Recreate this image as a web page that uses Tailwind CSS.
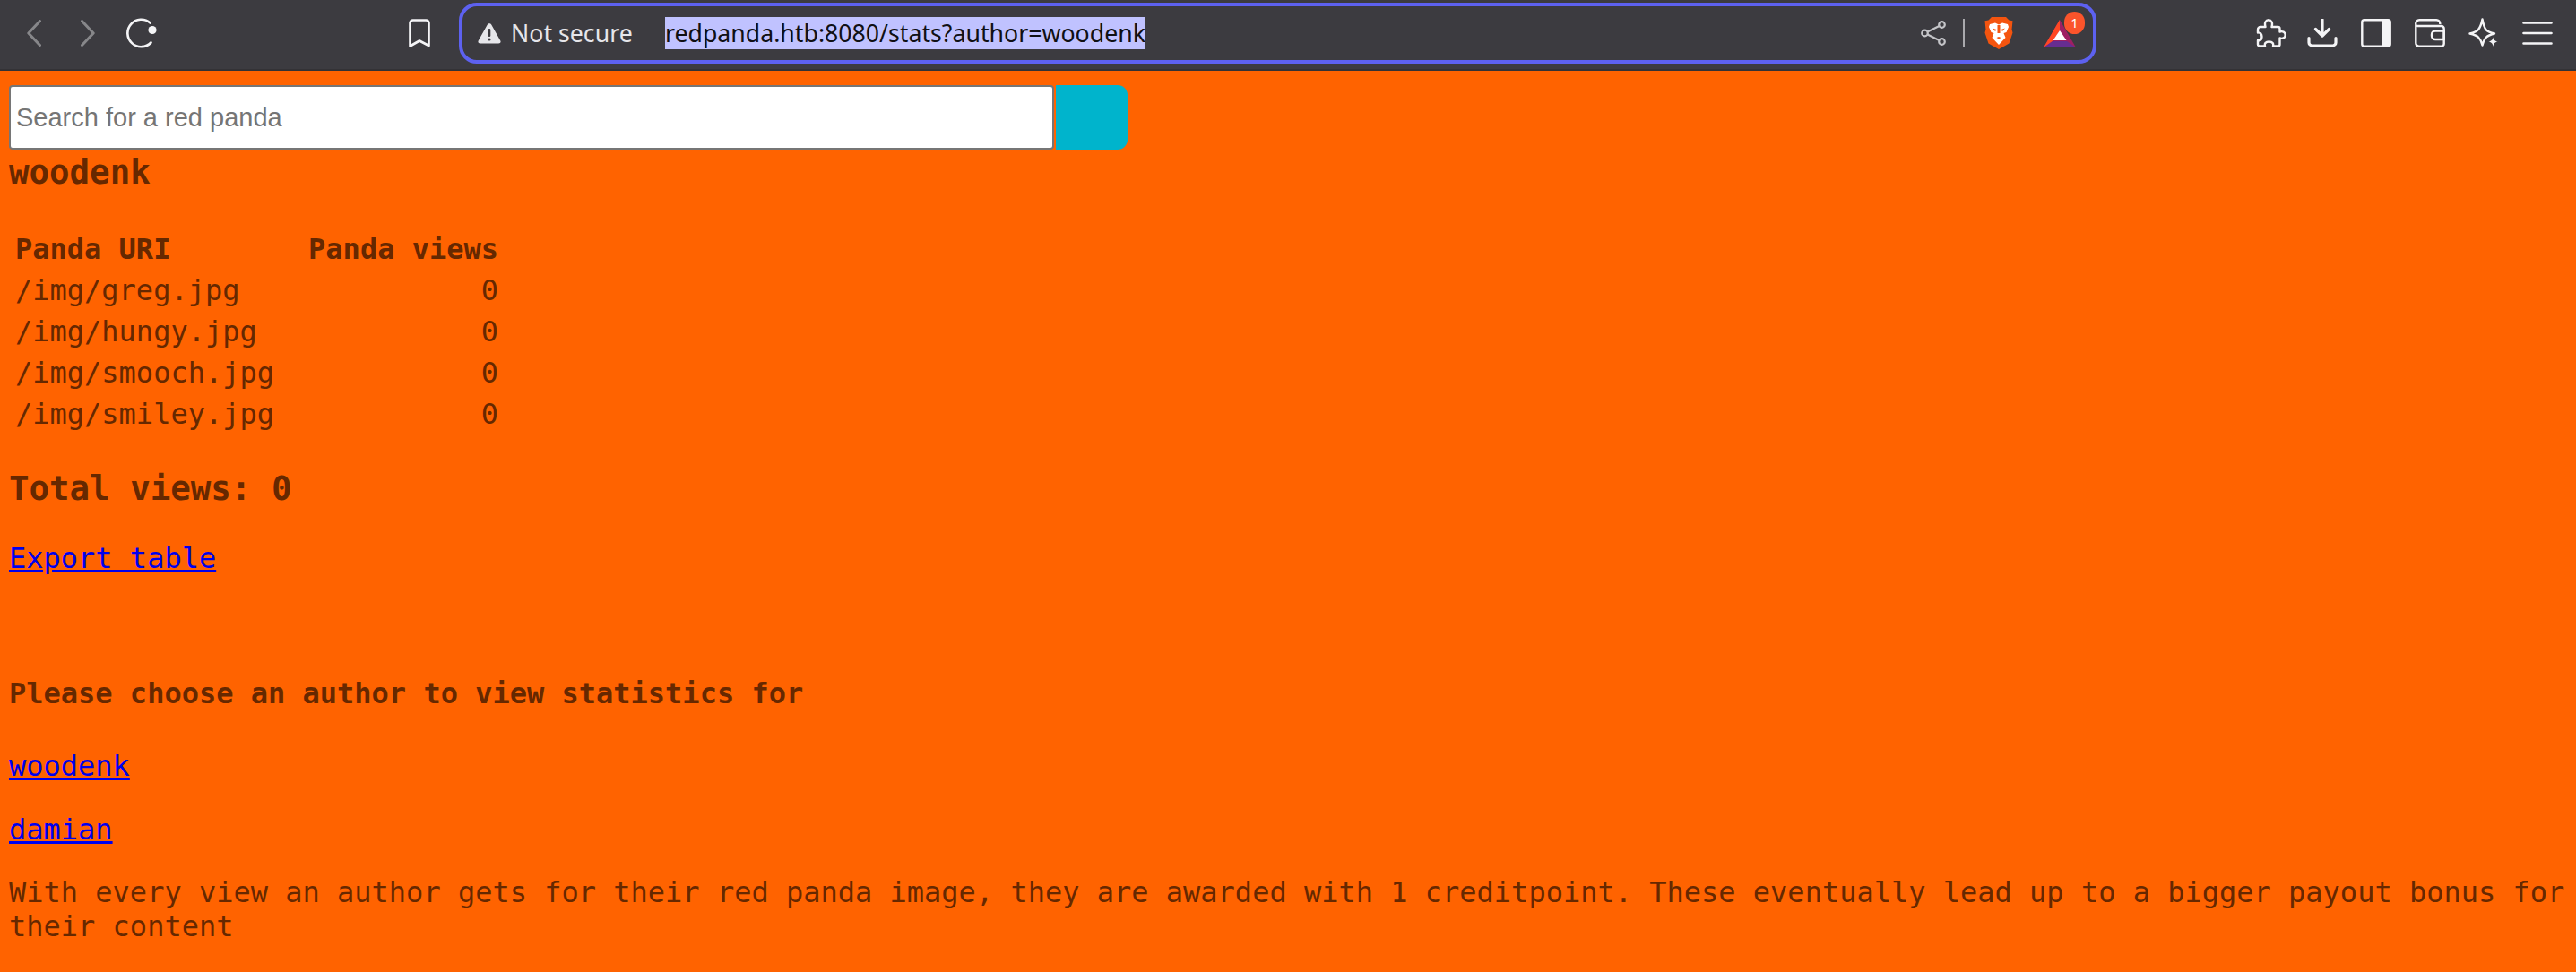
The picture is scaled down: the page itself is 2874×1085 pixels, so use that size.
<!DOCTYPE html>
<html lang="en">
<head>
<meta charset="utf-8">
<title>Red Panda Search</title>
<script src="https://cdn.jsdelivr.net/npm/@tailwindcss/browser@4"></script>
</head>
<body class="bg-[#ff6300] font-['DejaVu_Sans_Mono',monospace] text-[32px] text-[#662800] overflow-hidden">
<header class="h-[79px] pb-[3px] bg-[#3c3b40] border-b-2 border-[#333236] flex items-center font-['Noto_Sans',sans-serif] relative">
  <nav class="flex items-center pl-[30px] w-[512px] shrink-0">
    <svg class="w-[16px] h-[30px]" viewBox="0 0 16 30" fill="none" stroke="#87878a" stroke-width="3" stroke-linecap="round" stroke-linejoin="round"><path d="M14.5 1.5 1.8 15l12.7 13.5"/></svg>
    <svg class="w-[16px] h-[30px] ml-[44px]" viewBox="0 0 16 30" fill="none" stroke="#87878a" stroke-width="3" stroke-linecap="round" stroke-linejoin="round"><path d="M1.5 1.5 14.2 15 1.5 28.5"/></svg>
    <svg class="w-[34px] h-[34px] ml-[35px]" viewBox="0 0 34 34" fill="none"><path d="M27.5 27.5A15.2 15.2 0 1 1 26.5 5.5" stroke="#f4f4f6" stroke-width="2.6" stroke-linecap="round"/><circle cx="29" cy="13.5" r="4.6" fill="#f4f4f6"/></svg>
    <svg class="w-[24px] h-[32px] ml-[281px]" viewBox="0 0 24 32" fill="none" stroke="#f4f4f6" stroke-width="2.6" stroke-linejoin="round"><path d="M1.5 4.5a3 3 0 0 1 3-3h15a3 3 0 0 1 3 3v25.5L12 24.5 1.5 30.5z"/></svg>
  </nav>
  <div class="w-[1827px] h-[68px] shrink-0 border-4 border-[#5d61f0] rounded-[20px] flex items-center text-[#e6e6ea] text-[26.700px]">
    <svg class="w-[26px] h-[24px] ml-[17px] shrink-0" viewBox="0 0 26 24"><path d="M13 1.2c1 0 1.7.5 2.2 1.4l10 17.6c1 1.8 0 3.4-2 3.4H2.800c-2 0-3-1.600-2-3.400l10-17.600C11.300 1.700 12 1.200 13 1.200z" fill="#e6e6ea"/><rect x="11.700" y="7" width="2.600" height="9" rx="1.200" fill="#3c3b40"/><circle cx="13" cy="19" r="1.600" fill="#3c3b40"/></svg>
    <span class="ml-[11px] w-[172px] shrink-0 whitespace-nowrap">Not secure</span>
    <span class="bg-[#c0c2ff] text-[#101014] h-[36px] leading-[36px] whitespace-nowrap">redpanda.htb:8080/stats?author=woodenk</span>
    <svg class="w-[28px] h-[28px] ml-auto shrink-0" viewBox="0 0 28 28" fill="none" stroke="#c4c4c8" stroke-width="2.200"><circle cx="23.500" cy="4.500" r="3.300"/><circle cx="23.500" cy="23.500" r="3.300"/><circle cx="4.500" cy="14" r="3.300"/><path d="M7.500 12.500 20.500 6M7.500 15.500l13 6.500"/></svg>
    <span class="w-[2px] h-[32px] bg-[#a9a9ad] ml-[19px] shrink-0"></span>
    <svg class="w-[32px] h-[36px] ml-[22px] shrink-0" viewBox="0 0 32 36"><path d="M8 0h16l3.500 3.500 4 .8L30.500 14l1 3.500-4 12L16 36 4.500 29.500l-4-12L1.500 14 .5 4.300l4-.8z" fill="#f4540f"/><path d="M6 8l6-1.500 4 2 4-2L26 8l1 3-2.500 6-3 1 2 5-7.500 8-7.500-8 2-5-3-1L5 11z" fill="#fff"/><path d="M9 12.500l4.500 1.500-1.500 2zM23 12.500 18.500 14l1.500 2zM13.500 23l2.500 1.500 2.500-1.500-2.500-1zM14.500 9v9h3V9z" fill="#f4540f"/></svg>
    <span class="relative w-[36px] h-[31px] ml-[34px] shrink-0 block">
      <svg class="w-[36px] h-[31px] block" viewBox="0 0 36 31"><path d="M18 0 0 31h36z" fill="#9e1f63"/><path d="M18 0 0 31l10-7 8-12z" fill="#ff4724"/><path d="M0 31h36l-10-7H10z" fill="#662d91"/><path d="M18 12 10.500 23h15z" fill="#fff"/></svg>
      <span class="absolute left-[23px] top-[-9px] w-[23px] h-[25px] rounded-full bg-[#fb542b] text-white text-[15px] leading-[25px] text-center">1</span>
    </span>
    <span class="w-[19px] shrink-0"></span>
  </div>
  <div class="flex items-center gap-[26px] pl-[178px] shrink-0">
    <svg class="w-[34px] h-[32px] -mr-[3px]" viewBox="0 0 34 32" fill="none" stroke="#f4f4f6" stroke-width="2.400" stroke-linejoin="round"><path d="M5 9h5.500C9 4 11 1.300 14 1.300S19 4 17.500 9H24.500a2 2 0 0 1 2 2v3.500c3-1 6.200.2 6.200 3.500s-3.200 4.500-6.200 3.500v7a2 2 0 0 1-2 2H19c.8-3-.8-5-4.500-5s-5.300 2-4.500 5H4a2 2 0 0 1-2-2v-4.500C4.500 25 6.500 23 6.500 20S4.500 15 2 15.500V12a3 3 0 0 1 3-3z"/></svg>
    <svg class="w-[34px] h-[32px]" viewBox="0 0 34 32" fill="none"><path d="M17 1v17M9.500 11.500 17 19l7.500-7.500" stroke="#f4f4f6" stroke-width="3.200" stroke-linecap="round" stroke-linejoin="round"/><path d="M2 21.500v5a3.500 3.500 0 0 0 3.500 3.500h23a3.500 3.500 0 0 0 3.500-3.500v-5" stroke="#f4f4f6" stroke-width="3.200" stroke-linecap="round"/></svg>
    <svg class="w-[34px] h-[32px]" viewBox="0 0 34 32"><rect x="1.300" y="1.300" width="31.400" height="29.400" rx="2.500" fill="none" stroke="#f4f4f6" stroke-width="2.400"/><path d="M23 1.300h7.200a2.500 2.500 0 0 1 2.500 2.500v24.400a2.500 2.500 0 0 1-2.500 2.500H23z" fill="#f4f4f6"/></svg>
    <svg class="w-[34px] h-[32px]" viewBox="0 0 34 32" fill="none" stroke="#f4f4f6" stroke-width="2.400" stroke-linejoin="round"><path d="M1.300 6a4 4 0 0 1 4-4.700h19a4 4 0 0 1 4 4V6"/><path d="M1.300 6.500a2 2 0 0 0 2 1.500h26.400a3 3 0 0 1 3 3V28a3 3 0 0 1-3 2.700H5a3.700 3.700 0 0 1-3.700-3.700z"/><path d="M32.700 13.500H23a4 4 0 0 0-4 4v1.500a4 4 0 0 0 4 4h9.700z"/></svg>
    <svg class="w-[34px] h-[34px]" viewBox="0 0 34 34"><path d="M15.500 1.500c1 5 2 9 4 11.500s5.500 3.500 9.500 4.500c-4 1-7 2-9 4-2.300 2.300-3.500 5-4.500 9-1-4-2.300-6.700-4.500-9-2-2-5-3-9.500-4 4.500-1 7.500-2 9.500-4.500s3.500-6.500 4.500-11.500z" fill="none" stroke="#f4f4f6" stroke-width="2.400" stroke-linejoin="round"/><path d="M27.500 21.500c.6 3 1.600 4.200 5 5-3.400.8-4.400 2-5 5.500-.6-3.500-1.600-4.700-5-5.500 3.400-.8 4.400-2 5-5z" fill="#f4f4f6"/></svg>
    <svg class="w-[34px] h-[26px]" viewBox="0 0 34 26" stroke="#f4f4f6" stroke-width="2.600" stroke-linecap="round"><path d="M1.500 1.500h31M1.500 13h31M1.500 24.500h31"/></svg>
  </div>
</header>
<main class="pl-[10px] pt-[16px]">
  <form class="flex h-[72px] w-[1248px]">
    <input type="text" placeholder="Search for a red panda" class="w-[1166px] h-[72px] bg-white border-2 border-[#767676] rounded-[4px] pl-[6px] text-[29px] font-['Liberation_Sans',sans-serif] placeholder:text-[#757575] outline-none">
    <button type="button" aria-label="Search" class="w-[80px] h-[72px] ml-[2px] bg-[#00b4cc] rounded-r-[11px]"></button>
  </form>
  <h1 class="text-[37.440px] font-bold leading-[44px] mt-[3px]">woodenk</h1>
  <table class="mt-[41px] border-separate border-spacing-0 leading-[38px]">
    <thead><tr class="h-[46px]"><th class="w-[324px] pl-[7px] text-left font-bold">Panda URI</th><th class="text-right font-bold w-[222px]">Panda views</th></tr></thead>
    <tbody>
      <tr class="h-[46px]"><td class="pl-[7px]">/img/greg.jpg</td><td class="text-right">0</td></tr>
      <tr class="h-[46px]"><td class="pl-[7px]">/img/hungy.jpg</td><td class="text-right">0</td></tr>
      <tr class="h-[46px]"><td class="pl-[7px]">/img/smooch.jpg</td><td class="text-right">0</td></tr>
      <tr class="h-[46px]"><td class="pl-[7px]">/img/smiley.jpg</td><td class="text-right">0</td></tr>
    </tbody>
  </table>
  <h2 class="text-[37.440px] font-bold leading-[44px] mt-[38px]">Total views: 0</h2>
  <p class="mt-[37px] leading-[38px]"><a href="#" class="text-[#0000ee] underline">Export table</a></p>
  <h3 class="font-bold leading-[38px] mt-[113px]">Please choose an author to view statistics for</h3>
  <p class="mt-[43px] leading-[38px]"><a href="#" class="text-[#0000ee] underline">woodenk</a></p>
  <p class="mt-[33px] leading-[38px]"><a href="#" class="text-[#0000ee] underline">damian</a></p>
  <p class="mt-[32px] leading-[38px] w-[2864px] pr-[10px]">With every view an author gets for their red panda image, they are awarded with 1 creditpoint. These eventually lead up to a bigger payout bonus for their content</p>
</main>
</body>
</html>
